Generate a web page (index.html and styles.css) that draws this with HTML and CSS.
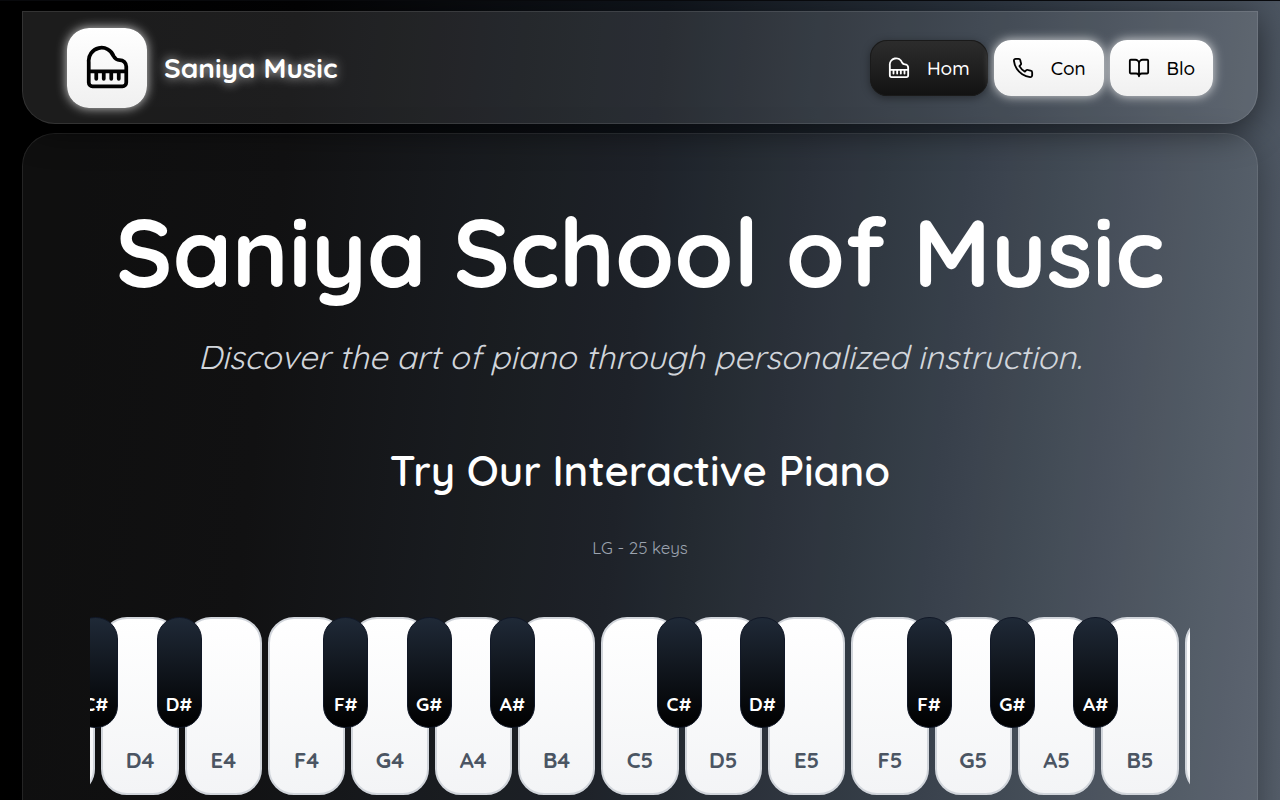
FILE: index.html
```html
<!DOCTYPE html>
<html lang="en">
    <head>
        <meta charset="utf-8">
        <meta name="viewport" content="width=device-width, initial-scale=1">
        <title>Saniya School of Music</title>
        <link rel="stylesheet" href="styles.css">
    </head>

    <body>
        <header class="navbar">
            <a class="brand" href="#">
                <span class="logo">
                    <svg class="icon" viewBox="0 0 24 24"><path d="M18.5 8c-1.4 0-2.6-.8-3.2-2A6.87 6.87 0 0 0 2 9v11a2 2 0 0 0 2 2h16a2 2 0 0 0 2-2v-8.5C22 9.6 20.4 8 18.5 8M2 14h20M6 14v4M10 14v4M14 14v4M18 14v4"/></svg>
                </span>
                <span class="brand-name">Saniya Music</span>
            </a>

            <nav class="links">
                <a class="link active" href="#home">
                    <svg class="icon" viewBox="0 0 24 24"><path d="M18.5 8c-1.4 0-2.6-.8-3.2-2A6.87 6.87 0 0 0 2 9v11a2 2 0 0 0 2 2h16a2 2 0 0 0 2-2v-8.5C22 9.6 20.4 8 18.5 8M2 14h20M6 14v4M10 14v4M14 14v4M18 14v4"/></svg>
                    Hom
                </a>
                <a class="link" href="#contact">
                    <svg class="icon" viewBox="0 0 24 24"><path d="M22 16.92v3a2 2 0 0 1-2.18 2 19.79 19.79 0 0 1-8.63-3.07 19.5 19.5 0 0 1-6-6 19.79 19.79 0 0 1-3.07-8.67A2 2 0 0 1 4.11 2h3a2 2 0 0 1 2 1.72 12.84 12.84 0 0 0 .7 2.81 2 2 0 0 1-.45 2.11L8.09 9.91a16 16 0 0 0 6 6l1.27-1.27a2 2 0 0 1 2.11-.45 12.84 12.84 0 0 0 2.81.7A2 2 0 0 1 22 16.92z"/></svg>
                    Con
                </a>
                <a class="link" href="#blog">
                    <svg class="icon" viewBox="0 0 24 24"><path d="M12 7v14M3 18a1 1 0 0 1-1-1V4a1 1 0 0 1 1-1h5a4 4 0 0 1 4 4 4 4 0 0 1 4-4h5a1 1 0 0 1 1 1v13a1 1 0 0 1-1 1h-6a3 3 0 0 0-3 3 3 3 0 0 0-3-3z"/></svg>
                    Blo
                </a>
            </nav>
        </header>

        <main class="panel">
            <h1 class="title">Saniya School of Music</h1>
            <p class="tagline">Discover the art of piano through personalized instruction.</p>

            <h2 class="subtitle">Try Our Interactive Piano</h2>
            <p class="size">LG - 25 keys</p>

            <div class="piano">
                <div class="keys">
                    <div class="slot"><button class="white">C4</button><button class="black">C#</button></div>
                    <div class="slot"><button class="white">D4</button><button class="black">D#</button></div>
                    <div class="slot"><button class="white">E4</button></div>
                    <div class="slot"><button class="white">F4</button><button class="black">F#</button></div>
                    <div class="slot"><button class="white">G4</button><button class="black">G#</button></div>
                    <div class="slot"><button class="white">A4</button><button class="black">A#</button></div>
                    <div class="slot"><button class="white">B4</button></div>
                    <div class="slot"><button class="white">C5</button><button class="black">C#</button></div>
                    <div class="slot"><button class="white">D5</button><button class="black">D#</button></div>
                    <div class="slot"><button class="white">E5</button></div>
                    <div class="slot"><button class="white">F5</button><button class="black">F#</button></div>
                    <div class="slot"><button class="white">G5</button><button class="black">G#</button></div>
                    <div class="slot"><button class="white">A5</button><button class="black">A#</button></div>
                    <div class="slot"><button class="white">B5</button></div>
                    <div class="slot"><button class="white">C6</button></div>
                </div>
            </div>
        </main>
    </body>
</html>
```

FILE: styles.css
```css
* {
    box-sizing: border-box;
}

html {
    background: #000;
}

body {
    margin: 0;
    padding: 10px 22px 0;
    min-height: 100vh;
    overflow-x: hidden;
    font-family: Quicksand, Lato, sans-serif;
    color: #fff;
    background: linear-gradient(96deg, #000 0%, #030304 22%, #10151c 49%, #2b343f 72%, #555e6a 100%) fixed;
    border-top: 1px solid #08090c;
}

a {
    color: inherit;
    text-decoration: none;
}

button {
    font-family: inherit;
    cursor: pointer;
}

.icon {
    width: 22px;
    height: 22px;
    fill: none;
    stroke: currentColor;
    stroke-width: 2;
    stroke-linecap: round;
    stroke-linejoin: round;
}

.navbar {
    position: relative;
    display: flex;
    align-items: center;
    justify-content: space-between;
    height: 113px;
    padding: 0 44px;
    border: 1px solid rgba(255, 255, 255, 0.1);
    border-radius: 0 0 33px 33px;
    background: rgba(255, 255, 255, 0.11);
    box-shadow: 0 8px 32px rgba(0, 0, 0, 0.5);
}

.brand {
    display: flex;
    align-items: center;
    gap: 17px;
}

.logo {
    display: flex;
    align-items: center;
    justify-content: center;
    width: 80px;
    height: 80px;
    border-radius: 22px;
    color: #000;
    background: linear-gradient(#fff, #f0f0f0);
    box-shadow: 0 0 11px rgba(255, 255, 255, 0.8);
}

.logo .icon {
    width: 45px;
    height: 45px;
}

.brand-name {
    font-size: 28px;
    font-weight: 700;
    text-shadow: 0 0 11px rgba(255, 255, 255, 0.8);
}

.links {
    display: flex;
    gap: 6px;
}

.link {
    display: flex;
    align-items: center;
    gap: 17px;
    height: 56px;
    padding: 0 18px;
    border-radius: 17px;
    font-size: 19px;
    font-weight: 500;
    color: #000;
    background: linear-gradient(#fff, #f0f0f0);
    box-shadow: 0 0 11px rgba(255, 255, 255, 0.8);
}

.link.active {
    color: #fff;
    background: linear-gradient(#2d2d2d, #121212);
    box-shadow: inset 0 0 0 1px #1a1a1a, 0 2px 8px rgba(0, 0, 0, 0.4);
}

.panel {
    margin-top: 9px;
    padding: 62px 66px 80px;
    border: 1px solid rgba(255, 255, 255, 0.09);
    border-radius: 33px 33px 0 0;
    background: rgba(255, 255, 255, 0.06);
    box-shadow: 0 8px 32px rgba(0, 0, 0, 0.3);
    text-align: center;
}

.title {
    margin: 0;
    font-size: 95px;
    font-weight: 700;
    line-height: 112px;
}

.tagline {
    margin: 25px 0 0;
    font-size: 33px;
    font-style: italic;
    font-weight: 400;
    line-height: 48px;
    color: #d1d5db;
}

.subtitle {
    margin: 62px 0 0;
    font-size: 42px;
    font-weight: 600;
    line-height: 56px;
}

.size {
    margin: 38px 0 0;
    font-size: 17px;
    line-height: 22px;
    color: #9ca3af;
}

.piano {
    display: flex;
    justify-content: center;
    max-width: 1100px;
    margin: 58px auto 0;
    overflow: hidden;
}

.keys {
    display: flex;
    flex: none;
    width: 1250px;
}

.slot {
    position: relative;
    flex: 1;
    padding: 0 3px;
}

.white {
    display: flex;
    align-items: flex-end;
    justify-content: center;
    width: 100%;
    height: 178px;
    padding: 0 0 19px;
    border: 2px solid #d1d5db;
    border-radius: 26px;
    font-size: 22px;
    font-weight: 700;
    color: #4b5563;
    background: linear-gradient(#fff, #f3f4f6);
}

/* straddles the gap to the next white key */
.black {
    position: absolute;
    z-index: 1;
    top: 0;
    right: -20px;
    display: flex;
    align-items: flex-end;
    justify-content: center;
    width: 45px;
    height: 111px;
    padding: 0 0 11px;
    border: 1px solid #111827;
    border-radius: 22px;
    font-size: 19px;
    font-weight: 700;
    color: #fff;
    background: linear-gradient(#1f2937, #000);
}
```
